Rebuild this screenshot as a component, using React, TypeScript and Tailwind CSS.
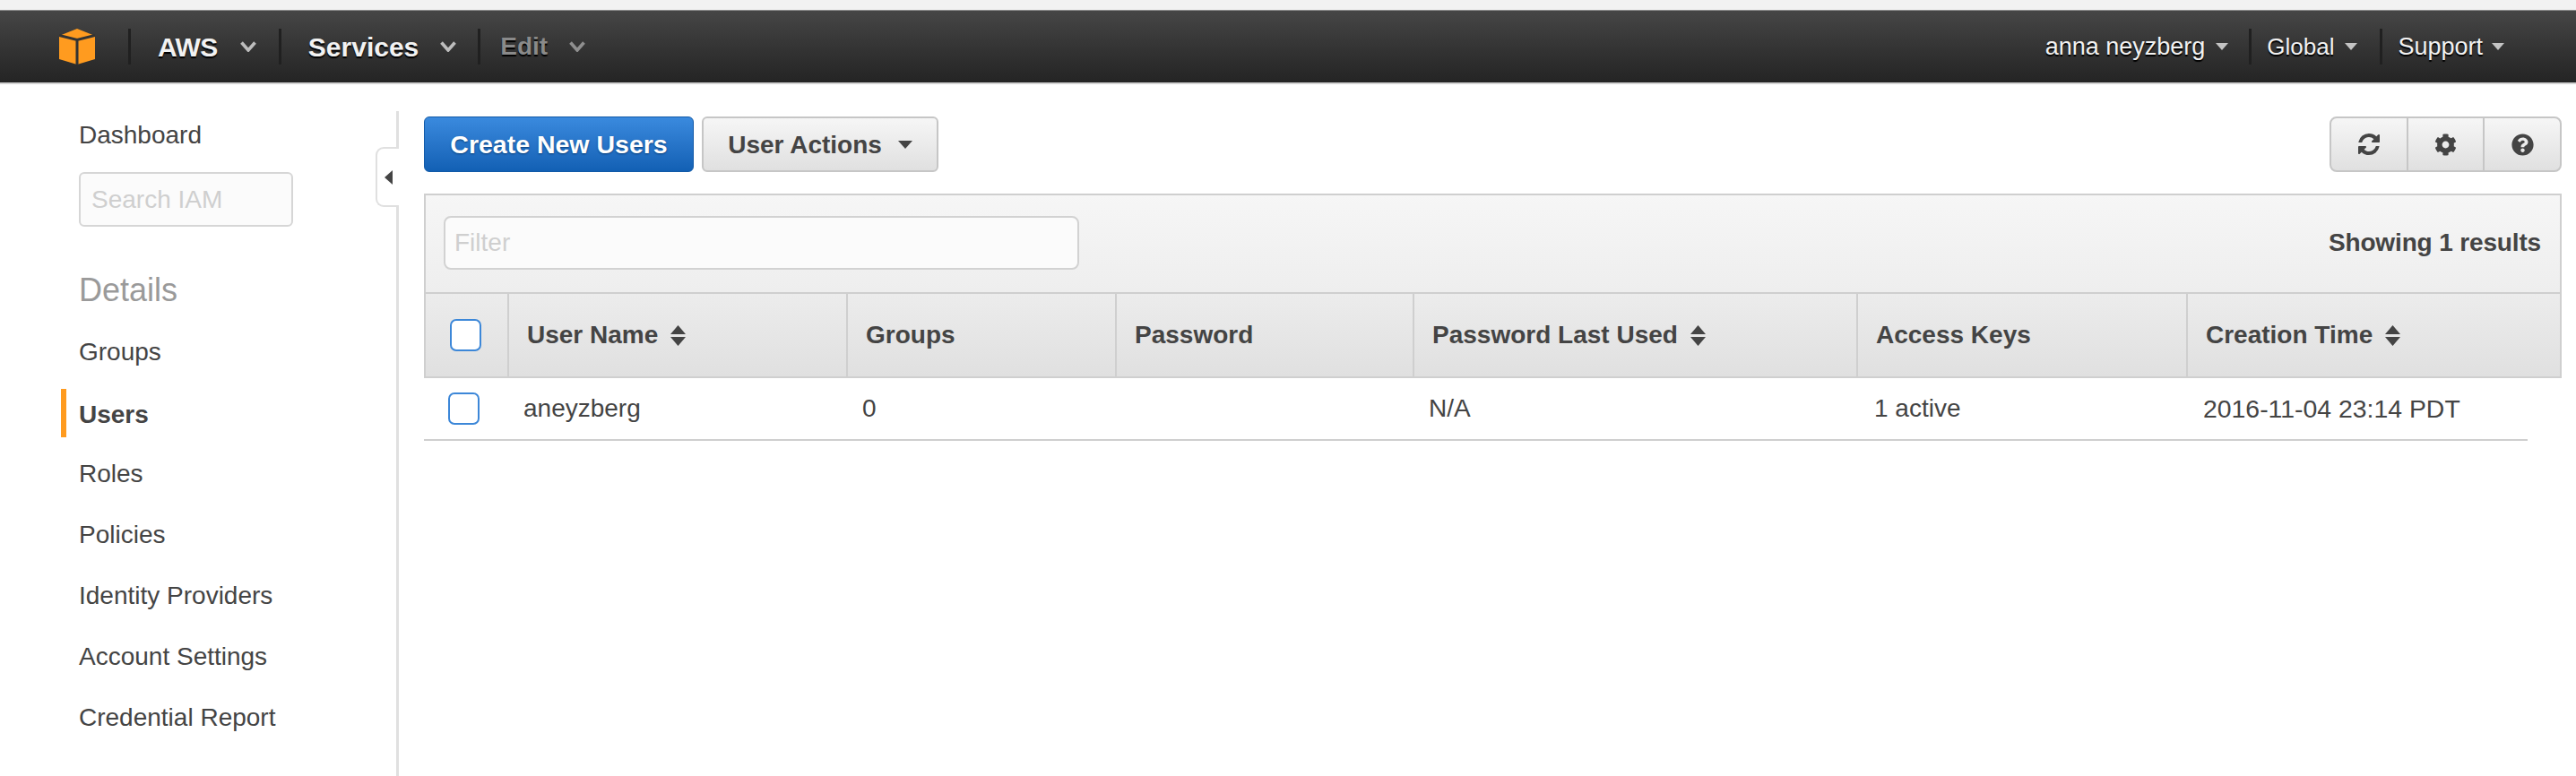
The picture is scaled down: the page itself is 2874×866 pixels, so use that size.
import { FaCog, FaQuestionCircle } from "react-icons/fa";

const navItems = ["Groups", "Users", "Roles", "Policies", "Identity Providers", "Account Settings", "Credential Report"];

const columns = [
  { label: "User Name", width: "w-[378px]", sort: true },
  { label: "Groups", width: "w-[300px]", sort: false },
  { label: "Password", width: "w-[332px]", sort: false },
  { label: "Password Last Used", width: "w-[495px]", sort: true },
  { label: "Access Keys", width: "w-[368px]", sort: false },
  { label: "Creation Time", width: "flex-1", sort: true },
];

function AwsLogo() {
  return (
    <svg width="40" height="40" viewBox="0 0 40 40" className="shrink-0">
      <polygon points="20,0 40,8 40,34 20,40 0,34 0,8" fill="#ff9b1f" />
      <path d="M0 7.5 L20 12.5 L40 7.5 M20 12.5 V40" fill="none" stroke="#333" strokeWidth="3" />
    </svg>
  );
}

function RefreshIcon() {
  return (
    <svg width="28" height="28" viewBox="0 0 1792 1792" fill="currentColor">
      <path d="M1639 1056q0 5-1 7-64 268-268 434.5t-478 166.5q-146 0-282.5-55t-243.5-157l-129 129q-19 19-45 19t-45-19-19-45v-448q0-26 19-45t45-19h448q26 0 45 19t19 45-19 45l-137 137q71 66 161 102t187 36q134 0 250-65t186-179q11-17 53-117 8-23 30-23h192q13 0 22.5 9.5t9.5 22.5zm25-800v448q0 26-19 45t-45 19h-448q-26 0-45-19t-19-45 19-45l138-138q-148-137-349-137-134 0-250 65t-186 179q-11 17-53 117-8 23-30 23h-199q-13 0-22.5-9.5t-9.5-22.5v-7q65-268 270-434.5t480-166.5q146 0 284 55.5t245 156.5l130-129q19-19 45-19t45 19 19 45z" />
    </svg>
  );
}

function Chevron({ color = "#bdbdbd" }: { color?: string }) {
  return (
    <svg width="18" height="12" viewBox="0 0 18 12" className="shrink-0">
      <path d="M1.5 1.5 L9 10 L16.5 1.5" fill="none" stroke={color} strokeWidth="3.6" />
    </svg>
  );
}

function Caret() {
  return (
    <svg width="14" height="8" viewBox="0 0 14 8" className="shrink-0">
      <path d="M0 0 H14 L7 8 Z" fill="#c4c4c4" />
    </svg>
  );
}

function SortIcon() {
  return (
    <svg width="17" height="23" viewBox="0 0 17 23" className="ml-[14px] shrink-0">
      <path d="M8.5 0 L17 10 H0 Z M0 13 H17 L8.5 23 Z" fill="#444" />
    </svg>
  );
}

function Separator() {
  return <div className="h-[40px] w-[3px] shrink-0 bg-[#202020]" />;
}

function Checkbox() {
  return <div className="h-[36px] w-[35px] shrink-0 rounded-[7px] border-2 border-[#3c87d8] bg-white" />;
}

export default function App() {
  return (
    <div className="flex h-[866px] w-[2874px] flex-col overflow-hidden bg-white font-['Liberation_Sans',Arial,sans-serif] text-[#444]">
      <div className="h-[11px] shrink-0 bg-[#f2f2f2]" />

      {/* Top bar */}
      <header className="flex h-[83px] shrink-0 items-center border-t border-b-2 border-t-[#8c8c8c] border-b-[#d2d2d2] bg-gradient-to-b from-[#464646] to-[#242424] pl-[66px] pr-[80px] text-[#f2f2f2] [text-shadow:0_2px_1px_#000]">
        <AwsLogo />
        <div className="ml-[37px]"><Separator /></div>
        <span className="ml-[30px] text-[30px] font-bold tracking-[-0.5px]">AWS</span>
        <div className="ml-[25px]"><Chevron /></div>
        <div className="ml-[25px]"><Separator /></div>
        <span className="ml-[30px] text-[30px] font-bold">Services</span>
        <div className="ml-[24px]"><Chevron /></div>
        <div className="ml-[24px]"><Separator /></div>
        <span className="ml-[22px] text-[28px] font-bold text-[#8a8a8a]">Edit</span>
        <div className="ml-[24px]"><Chevron color="#8f8f8f" /></div>

        <div className="ml-auto flex items-center text-[27px]">
          <span>anna neyzberg</span>
          <div className="ml-[12px]"><Caret /></div>
          <div className="ml-[23px]"><Separator /></div>
          <span className="ml-[17px] text-[26px]">Global</span>
          <div className="ml-[12px]"><Caret /></div>
          <div className="ml-[25px]"><Separator /></div>
          <span className="ml-[17px]">Support</span>
          <div className="ml-[10px]"><Caret /></div>
        </div>
      </header>

      <div className="flex min-h-0 flex-1">
        {/* Sidebar */}
        <aside className="relative mt-[30px] w-[445px] shrink-0 border-r-[3px] border-[#e0e0e0] pl-[68px]">
          <div className="pl-[20px] pt-[11px] text-[28px] leading-[32px]">Dashboard</div>
          <div className="pl-[20px] pt-[25px]">
            <input
              placeholder="Search IAM"
              className="h-[61px] w-[239px] rounded-[6px] border-2 border-[#d6d6d6] bg-[#fbfbfb] px-[12px] text-[28px] outline-none placeholder:text-[#cfcfcf]"
            />
          </div>
          <div className="pl-[20px] pt-[51px] text-[36px] leading-[40px] text-[#9a9a9a]">Details</div>
          <nav className="mt-[22px] flex flex-col gap-[14px] text-[28px]">
            {navItems.map((item) =>
              item === "Users" ? (
                <div key={item} className="flex h-[54px] items-center border-l-[6px] border-[#ff9b1f] pl-[14px] pt-[3px] font-bold">
                  {item}
                </div>
              ) : (
                <div key={item} className="flex h-[54px] items-center border-l-[6px] border-transparent pl-[14px]">
                  {item}
                </div>
              )
            )}
          </nav>

          {/* Collapse tab */}
          <div className="absolute right-[-3px] top-[40px] flex h-[67px] w-[26px] items-center justify-end rounded-l-[9px] border-2 border-r-0 border-[#e0e0e0] bg-white pr-[7px]">
            <svg width="9" height="16" viewBox="0 0 9 16">
              <path d="M9 0 V16 L0 8 Z" fill="#444" />
            </svg>
          </div>
        </aside>

        {/* Main */}
        <main className="min-w-0 flex-1 pl-[28px] pr-[16px] pt-[36px]">
          <div className="flex h-[62px] items-stretch">
            <button className="w-[301px] rounded-[6px] border border-[#125aa8] bg-gradient-to-b from-[#3a8ade] to-[#1260b4] pt-[1px] text-[28.5px] font-bold text-white [text-shadow:0_1px_2px_#0a3e78]">
              Create New Users
            </button>
            <button className="ml-[9px] flex w-[264px] items-center justify-center gap-[18px] rounded-[6px] border-2 border-[#c6c6c6] bg-gradient-to-b from-[#f6f6f6] to-[#e0e0e0] pt-[1px] text-[28px] font-bold">
              User Actions
              <svg width="16" height="9" viewBox="0 0 16 9">
                <path d="M0 0 H16 L8 9 Z" fill="#444" />
              </svg>
            </button>
            <div className="ml-auto flex w-[259px] overflow-hidden rounded-[8px] border-2 border-[#c6c6c6] bg-gradient-to-b from-[#f6f6f6] to-[#e0e0e0] text-[25px] text-[#444]">
              <div className="flex flex-1 items-center justify-center border-r-2 border-[#c6c6c6]"><RefreshIcon /></div>
              <div className="flex flex-1 items-center justify-center border-r-2 border-[#c6c6c6]"><FaCog /></div>
              <div className="flex flex-1 items-center justify-center"><FaQuestionCircle /></div>
            </div>
          </div>

          {/* Table panel */}
          <div className="mt-[24px] border-2 border-b-0 border-[#cfcfcf]">
            <div className="flex h-[108px] items-center justify-between bg-gradient-to-b from-[#f6f6f6] to-[#eeeeee] pb-[2px] pl-[20px] pr-[21px]">
              <input
                placeholder="Filter"
                className="h-[60px] w-[709px] rounded-[8px] border-2 border-[#d2d2d2] bg-[#fbfbfb] px-[10px] text-[28px] outline-none placeholder:text-[#cfcfcf]"
              />
              <span className="text-[28px] font-bold tracking-[-0.15px]">Showing 1 results</span>
            </div>
            <div className="flex h-[96px] border-y-2 border-[#cfcfcf] bg-gradient-to-b from-[#ececec] to-[#e0e0e0] text-[28px] font-bold">
              <div className="flex w-[93px] shrink-0 items-center border-r-2 border-[#cfcfcf] pl-[27px]">
                <Checkbox />
              </div>
              {columns.map((col) => (
                <div key={col.label} className={`flex items-center pl-[20px] ${col.width} ${col.label === "Creation Time" ? "" : "shrink-0 border-r-2 border-[#cfcfcf]"}`}>
                  {col.label}
                  {col.sort && <SortIcon />}
                </div>
              ))}
            </div>
          </div>

          {/* Row */}
          <div className="flex h-[70px] w-[2347px] items-center border-b-2 border-[#cfcfcf] text-[28px]">
            <div className="flex w-[111px] shrink-0 pl-[27px]"><Checkbox /></div>
            <div className="w-[378px] shrink-0">aneyzberg</div>
            <div className="w-[632px] shrink-0">0</div>
            <div className="w-[497px] shrink-0">N/A</div>
            <div className="w-[367px] shrink-0">1 active</div>
            <div className="text-[28.4px]">2016-11-04 23:14 PDT</div>
          </div>
        </main>
      </div>
    </div>
  );
}
